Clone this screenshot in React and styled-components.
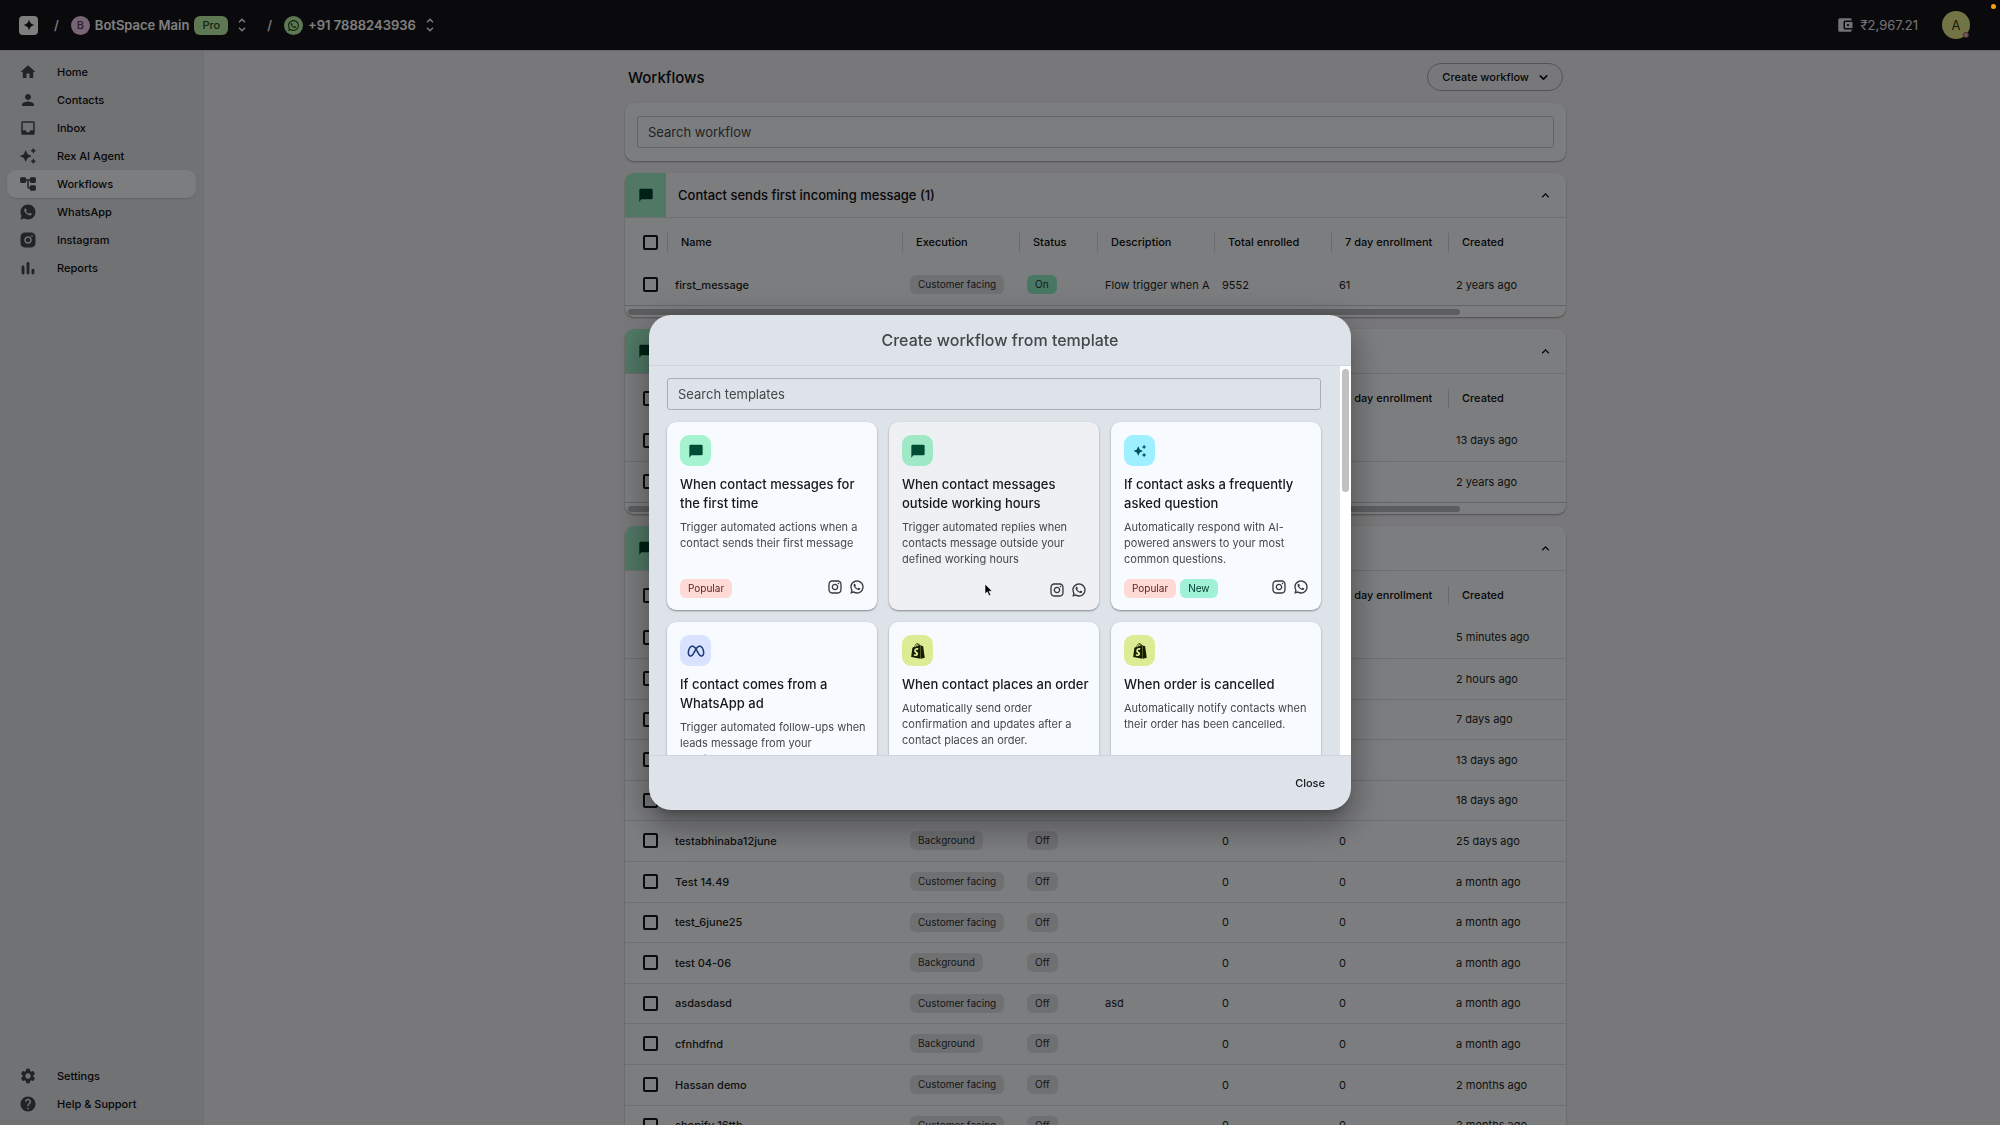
import React from 'react'
import styled, { createGlobalStyle, css } from 'styled-components'
import {
  MdHome,
  MdPerson,
  MdInbox,
  MdAutoAwesome,
  MdSettings,
  MdHelp,
  MdUnfoldMore,
  MdAccountBalanceWallet,
  MdKeyboardArrowUp,
} from 'react-icons/md'
import { RiInstagramFill, RiWhatsappFill, RiInstagramLine, RiWhatsappLine, RiMetaLine } from 'react-icons/ri'
import { FaShopify } from 'react-icons/fa6'
import { ChevronDown } from 'lucide-react'

const GlobalStyle = createGlobalStyle`
* { box-sizing: border-box; }
body {
  margin: 0;
  font-family: Inter, 'Noto Sans', sans-serif;
  font-size: 11px;
  color: #0c0d10;
}
button, input { font-family: inherit; }
svg { display: block; flex-shrink: 0; }
`;

const Shell = styled.div`
display: flex;
flex-direction: column;
height: 100vh;
overflow: hidden;
background-color: #f1f1f4;
`;

// top bar
const Header = styled.header`
display: flex;
align-items: center;
height: 50px;
flex-shrink: 0;
padding: 0 30px 0 19px;
background-color: #141418;
color: #ffffff;
`;
const Logo = styled.a`
display: flex;
align-items: center;
justify-content: center;
width: 19px;
height: 19px;
border-radius: 4px;
background-color: #ffffff;
color: #141418;
`;
const Slash = styled.span`
margin: 0 12px 0 16px;
font-size: 13px;
font-weight: 500;
`;
const Switcher = styled.button`
display: flex;
align-items: center;
gap: 5px;
padding: 0;
border: none;
background: none;
color: #ffffff;
font-size: 13px;
font-weight: 600;
`;
const Round = styled.span`
display: flex;
align-items: center;
justify-content: center;
width: 19px;
height: 19px;
border-radius: 50%;
background-color: ${({ $bg }) => $bg};
color: ${({ $color }) => $color};
font-size: 11px;
font-weight: 500;
`;
const Plan = styled.span`
height: 19px;
padding: 0 8px;
border-radius: 6px;
background-color: #bcf0a8;
color: #24481c;
font-size: 11px;
font-weight: 500;
line-height: 19px;
`;
const Balance = styled.div`
display: flex;
align-items: center;
gap: 7px;
margin-left: auto;
font-size: 13px;
color: #e6e6ea;
`;
const Avatar = styled.button`
position: relative;
width: 28px;
height: 28px;
margin-left: 24px;
padding: 0;
border: none;
border-radius: 50%;
background-color: #e5e88c;
color: #33360a;
font-size: 13px;
`;
const Status = styled.span`
position: absolute;
right: 1px;
bottom: 1px;
width: 6px;
height: 6px;
border-radius: 50%;
background-color: #f0b8b8;
border: 1px solid #8a5050;
`;

const Body = styled.div`
display: flex;
flex: 1;
min-height: 0;
border-top: 1px solid #d0d1d4;
`;

// left navigation
const Sidebar = styled.nav`
display: flex;
flex-direction: column;
justify-content: space-between;
width: 204px;
flex-shrink: 0;
padding: 7px;
background-color: #e3e5e8;
border-right: 1px solid #dcdee1;
`;
const NavLink = styled.a`
display: flex;
align-items: center;
gap: 20px;
height: 28px;
padding-left: 12px;
border-radius: 9px;
color: #0c0d10;
font-weight: 500;
text-decoration: none;
svg {
  color: #43474b;
}
${({ $active }) => $active && css`
background-color: #f9fbfe;
box-shadow: 0 1px 2px rgba(0, 0, 0, 0.15);
`}
`;

const Main = styled.main`
flex: 1;
min-width: 0;
padding: 12px 13px 0 0;
`;
const Column = styled.div`
max-width: 941px;
margin: 0 auto;
`;
const TitleRow = styled.div`
display: flex;
align-items: center;
justify-content: space-between;
padding: 0 3px;
margin-bottom: 12px;
`;
const PageTitle = styled.h1`
margin: 0;
font-size: 15px;
font-weight: 500;
`;
const CreateButton = styled.button`
display: flex;
align-items: center;
gap: 8px;
height: 28px;
padding: 0 12px 0 14px;
border: 1px solid #a4a7ab;
border-radius: 14px;
background: none;
color: #0c0d10;
font-size: 11px;
font-weight: 500;
`;
const Card = styled.section`
margin-bottom: 12px;
border-radius: 9px;
background-color: #f9fbfe;
box-shadow: 0 1px 2px rgba(0, 0, 0, 0.35);
overflow: hidden;
`;
const SearchCard = styled(Card)`
padding: 13px 12px;
`;
const SearchField = styled.input`
display: block;
width: 100%;
height: 32px;
padding: 0 10px;
border: 1px solid ${({ $border }) => $border};
border-radius: 3px;
background: none;
outline: none;
font-size: 13px;
&::placeholder {
  color: #44474b;
  opacity: 1;
}
`;

// one accordion per trigger
const GroupHead = styled.div`
display: flex;
align-items: center;
height: 45px;
border-bottom: 1px solid #dcdee1;
`;
const GroupIcon = styled.span`
display: flex;
align-items: center;
justify-content: center;
align-self: stretch;
width: 41px;
margin-right: 12px;
background-color: #a2f0cb;
color: #00422b;
`;
const GroupTitle = styled.h2`
flex: 1;
margin: 0;
font-size: 13px;
font-weight: 500;
`;
const Toggle = styled.button`
margin-right: 13px;
padding: 0;
border: none;
background: none;
color: #0c0d10;
`;
const Table = styled.table`
width: 100%;
table-layout: fixed;
border-collapse: collapse;
tbody tr {
  height: 41px;
}
tbody tr:nth-child(5n + 3),
tbody tr:nth-child(5n) {
  height: 40px;
}
tbody tr + tr td {
  border-top: 1px solid #dcdee1;
}
`;
const Col = styled.col`
width: ${({ $w }) => $w}px;
`;
const HeadCell = styled.th`
height: 46px;
padding: 2px 0 0;
text-align: left;
font-weight: 500;
white-space: nowrap;
`;
const HeadLabel = styled.div`
padding-left: 13px;
border-left: 1px solid #d2d5d8;
line-height: 19px;
`;
const Cell = styled.td`
padding: 0 5px 0 8px;
overflow: hidden;
white-space: nowrap;
color: #1c1e22;
font-weight: ${({ $strong }) => ($strong ? 500 : 400)};
`;
const CheckCell = styled.td`
padding: 0 0 0 18px;
`;
const CheckHead = styled.th`
padding: 2px 0 0 18px;
`;
const Checkbox = styled.input.attrs({ type: 'checkbox' })`
display: block;
appearance: none;
width: 15px;
height: 15px;
margin: 0;
border: 2px solid #14161a;
border-radius: 2px;
`;
const Tag = styled.span`
display: inline-block;
padding: 0 8px;
border-radius: 6px;
background-color: ${({ $bg }) => $bg || '#dfe0e3'};
color: ${({ $color }) => $color || '#2c2f33'};
font-size: 10px;
line-height: 19px;
`;
const HScroll = styled.div`
height: 12px;
padding: 3px 3px 0;
border-top: 1px solid #c8cacd;
&::before {
  content: '';
  display: block;
  width: 89%;
  height: 6px;
  border-radius: 3px;
  background-color: #b9bbbe;
}
`;

// dialog
const Overlay = styled.div`
position: fixed;
inset: 0;
display: flex;
align-items: center;
justify-content: center;
background-color: rgba(0, 0, 0, 0.5);
`;
const Dialog = styled.div`
display: flex;
flex-direction: column;
width: 100%;
max-width: 702px;
height: 44vh;
border-radius: 22px;
background-color: #dee2e9;
overflow: hidden;
box-shadow: 0 9px 12px -6px rgba(0, 0, 0, 0.3), 0 19px 30px 3px rgba(0, 0, 0, 0.18), 0 7px 36px 6px rgba(0, 0, 0, 0.16);
`;
const DialogTitle = styled.h2`
margin: 0;
border-bottom: 1px solid #cfd5dc;
color: #44474b;
font-size: 16px;
font-weight: 500;
line-height: 50px;
text-align: center;
`;
const DialogBody = styled.div`
display: flex;
flex: 1;
min-height: 0;
`;
const DialogContent = styled.div`
flex: 1;
padding: 12px 19px 0 18px;
overflow: hidden;
`;
const DialogScroll = styled.div`
width: 11px;
padding: 3px 2px;
background-color: #ffffff;
&::before {
  content: '';
  display: block;
  height: 123px;
  width: 7px;
  border-radius: 4px;
  background-color: #c1c1c1;
}
`;
const DialogFooter = styled.div`
display: flex;
align-items: center;
justify-content: flex-end;
height: 55px;
padding: 0 26px 1px 0;
border-top: 1px solid #cfd5dc;
`;
const CloseButton = styled.button`
padding: 0;
border: none;
background: none;
color: #16181c;
font-size: 11px;
font-weight: 500;
`;
const Templates = styled.div`
display: grid;
grid-template-columns: repeat(3, 1fr);
gap: 12px;
margin-top: 12px;
`;
const Template = styled.article`
position: relative;
display: flex;
flex-direction: column;
min-height: 188px;
padding: 13px 8px 12px 13px;
border-radius: 9px;
background-color: ${({ $hover }) => ($hover ? '#eef0f4' : '#f7fbff')};
box-shadow: 0 1px 2px rgba(0, 0, 0, 0.4);
`;
const TemplateIcon = styled.span`
display: flex;
align-items: center;
justify-content: center;
width: 31px;
height: 31px;
border-radius: 9px;
background-color: ${({ $bg }) => $bg};
color: ${({ $color }) => $color};
`;
const TemplateTitle = styled.h3`
margin: 9px 0 6px;
color: #16181c;
font-size: 13px;
font-weight: 500;
line-height: 19px;
`;
const TemplateText = styled.p`
margin: 0;
padding-right: 2px;
color: #44474b;
font-size: 11px;
line-height: 16px;
`;
const TemplateFoot = styled.div`
display: flex;
align-items: flex-start;
gap: 4px;
margin-top: auto;
padding-right: 4px;
`;
const Channels = styled.div`
display: flex;
gap: 6px;
margin-left: auto;
color: #35383c;
`;
const Pointer = styled.svg`
position: absolute;
left: 95px;
top: 161px;
`;
const Recording = styled.span`
position: fixed;
top: 4px;
right: 4px;
width: 5px;
height: 5px;
border-radius: 50%;
background-color: #ff9f0a;
`;

const StarIcon = () => (
  <svg width="12" height="12" viewBox="0 0 24 24" fill="currentColor">
    <path d="M12 1c1.6 6.600 4.400 9.400 11 11c-6.600 1.600-9.400 4.400-11 11c-1.600-6.600-4.400-9.400-11-11c6.600-1.600 9.400-4.400 11-11z" />
  </svg>
)

const ChatIcon = () => (
  <svg width="16" height="16" viewBox="0 0 24 24" fill="currentColor">
    <path d="M4 2.500h16a2 2 0 0 1 2 2v12a2 2 0 0 1-2 2H5l-3 3.500v-17.500a2 2 0 0 1 2-2z" />
  </svg>
)

const TreeIcon = () => (
  <svg width="18" height="18" viewBox="0 0 24 24" fill="currentColor">
    <rect x="1.500" y="3" width="8" height="7.500" rx="1.800" />
    <rect x="14.500" y="3" width="8" height="7.500" rx="1.800" />
    <rect x="14.500" y="13.500" width="8" height="7.500" rx="1.800" />
    <path d="M9 6.700h6M12 6.700v9a1.600 1.600 0 0 0 1.600 1.600h1.500" fill="none" stroke="currentColor" strokeWidth="2" />
  </svg>
)

const BarsIcon = () => (
  <svg width="18" height="18" viewBox="0 0 24 24" fill="currentColor">
    <rect x="3.500" y="8.500" width="3.800" height="12" rx="1.900" />
    <rect x="10.100" y="4" width="3.800" height="16.500" rx="1.900" />
    <rect x="16.700" y="13" width="3.800" height="7.500" rx="1.900" />
  </svg>
)

const navItems = [
  ['Home', <MdHome size={18} />],
  ['Contacts', <MdPerson size={18} />],
  ['Inbox', <MdInbox size={18} />],
  ['Rex AI Agent', <MdAutoAwesome size={18} />],
  ['Workflows', <TreeIcon />],
  ['WhatsApp', <RiWhatsappFill size={18} />],
  ['Instagram', <RiInstagramFill size={18} />],
  ['Reports', <BarsIcon />],
]

const footItems = [
  ['Settings', <MdSettings size={18} />],
  ['Help & Support', <MdHelp size={18} />],
]

const CF = 'Customer facing'
const BG = 'Background'

// name, execution, status, description, total, week, created
const groups = [
  {
    title: 'Contact sends first incoming message (1)',
    scroll: true,
    rows: [['first_message', CF, 'On', 'Flow trigger when A', '9552', '61', '2 years ago']],
  },
  {
    title: 'Contact sends a message (2)',
    scroll: true,
    rows: [
      ['welcome_flow', CF, 'Off', '', '0', '0', '13 days ago'],
      ['keyword_reply', CF, 'Off', '', '0', '0', '2 years ago'],
    ],
  },
  {
    title: 'Manually triggered (13)',
    rows: [
      ['demo_flow', CF, 'Off', '', '0', '0', '5 minutes ago'],
      ['demo_flow_2', CF, 'Off', '', '0', '0', '2 hours ago'],
      ['test_july', CF, 'Off', '', '0', '0', '7 days ago'],
      ['test_june', CF, 'Off', '', '0', '0', '13 days ago'],
      ['test_flow', CF, 'Off', '', '0', '0', '18 days ago'],
      ['testabhinaba12june', BG, 'Off', '', '0', '0', '25 days ago'],
      ['Test 14.49', CF, 'Off', '', '0', '0', 'a month ago'],
      ['test_6june25', CF, 'Off', '', '0', '0', 'a month ago'],
      ['test 04-06', BG, 'Off', '', '0', '0', 'a month ago'],
      ['asdasdasd', CF, 'Off', 'asd', '0', '0', 'a month ago'],
      ['cfnhdfnd', BG, 'Off', '', '0', '0', 'a month ago'],
      ['Hassan demo', CF, 'Off', '', '0', '0', '2 months ago'],
      ['shopify 16tth', CF, 'Off', '', '0', '0', '2 months ago'],
    ],
  },
]

const heads = ['Name', 'Execution', 'Status', 'Description', 'Total enrolled', '7 day enrollment', 'Created']
const widths = [42, 235, 117, 78, 117, 117, 117]

const green = { bg: '#a5f4cf', color: '#004d36' }
const lime = { bg: '#dcec94', color: '#171e00' }

const templates = [
  {
    title: 'When contact messages for the first time',
    text: 'Trigger automated actions when a contact sends their first message',
    icon: <ChatIcon />,
    tone: green,
    tags: ['Popular'],
  },
  {
    title: 'When contact messages outside working hours',
    text: 'Trigger automated replies when contacts message outside your defined working hours',
    icon: <ChatIcon />,
    tone: { bg: '#9fe9c6', color: '#004d36' },
    tags: [],
    hover: true,
  },
  {
    title: 'If contact asks a frequently asked question',
    text: 'Automatically respond with AI-powered answers to your most common questions.',
    icon: <MdAutoAwesome size={14} />,
    tone: { bg: '#9eefff', color: '#004e5a' },
    tags: ['Popular', 'New'],
  },
  {
    title: 'If contact comes from a WhatsApp ad',
    text: 'Trigger automated follow-ups when leads message from your WhatsApp ads.',
    icon: <RiMetaLine size={18} />,
    tone: { bg: '#d9e2ff', color: '#1f3a78' },
    tags: [],
  },
  {
    title: 'When contact places an order',
    text: 'Automatically send order confirmation and updates after a contact places an order.',
    icon: <FaShopify size={16} />,
    tone: lime,
    tags: [],
  },
  {
    title: 'When order is cancelled',
    text: 'Automatically notify contacts when their order has been cancelled.',
    icon: <FaShopify size={16} />,
    tone: lime,
    tags: [],
  },
]

const tagTones = {
  Popular: { bg: '#ffd9d6', color: '#5c2523' },
  New: { bg: '#9ff2d6', color: '#00382c' },
}

const Group = ({ title, rows, scroll }) => (
  <Card>
    <GroupHead>
      <GroupIcon><ChatIcon /></GroupIcon>
      <GroupTitle>{title}</GroupTitle>
      <Toggle aria-label={`Collapse ${title}`}><MdKeyboardArrowUp size={15} /></Toggle>
    </GroupHead>
    <Table>
      <colgroup>
        {widths.map((w, i) => <Col key={i} $w={w} />)}
        <col />
      </colgroup>
      <thead>
        <tr>
          <CheckHead><Checkbox aria-label="Select all" /></CheckHead>
          {heads.map((h) => <HeadCell key={h}><HeadLabel>{h}</HeadLabel></HeadCell>)}
        </tr>
      </thead>
      <tbody>
        {rows.map(([name, execution, status, description, total, week, created]) => (
          <tr key={name}>
            <CheckCell><Checkbox aria-label={`Select ${name}`} /></CheckCell>
            <Cell $strong>{name}</Cell>
            <Cell><Tag>{execution}</Tag></Cell>
            <Cell><Tag $bg={status === 'On' ? '#90efc9' : undefined}>{status}</Tag></Cell>
            <Cell>{description}</Cell>
            <Cell>{total}</Cell>
            <Cell>{week}</Cell>
            <Cell>{created}</Cell>
          </tr>
        ))}
      </tbody>
    </Table>
    {scroll && <HScroll />}
  </Card>
)

const App = () => {
  return (
    <>
      <GlobalStyle />
      <Shell>
        <Header>
          <Logo href="#" aria-label="BotSpace"><StarIcon /></Logo>
          <Slash>/</Slash>
          <Switcher>
            <Round $bg="#efc8ea" $color="#5c3a58">B</Round>
            BotSpace Main
            <Plan>Pro</Plan>
            <MdUnfoldMore size={18} />
          </Switcher>
          <Slash>/</Slash>
          <Switcher>
            <Round $bg="#bcf0a8" $color="#24481c"><RiWhatsappLine size={13} /></Round>
            +91 7888243936
            <MdUnfoldMore size={18} />
          </Switcher>
          <Balance><MdAccountBalanceWallet size={18} />₹2,967.21</Balance>
          <Avatar aria-label="Account">A<Status /></Avatar>
        </Header>
        <Body>
          <Sidebar>
            <div>
              {navItems.map(([label, icon]) => (
                <NavLink key={label} href="#" $active={label === 'Workflows'}>{icon}{label}</NavLink>
              ))}
            </div>
            <div>
              {footItems.map(([label, icon]) => (
                <NavLink key={label} href="#">{icon}{label}</NavLink>
              ))}
            </div>
          </Sidebar>
          <Main>
            <Column>
              <TitleRow>
                <PageTitle>Workflows</PageTitle>
                <CreateButton>Create workflow <ChevronDown size={13} strokeWidth={3} /></CreateButton>
              </TitleRow>
              <SearchCard>
                <SearchField $border="#c4c7ca" placeholder="Search workflow" aria-label="Search workflow" />
              </SearchCard>
              {groups.map((g) => <Group key={g.title} {...g} />)}
            </Column>
          </Main>
        </Body>
      </Shell>

      <Overlay>
        <Dialog role="dialog" aria-labelledby="dialog-title">
          <DialogTitle id="dialog-title">Create workflow from template</DialogTitle>
          <DialogBody>
            <DialogContent>
              <SearchField $border="#a9afb6" placeholder="Search templates" aria-label="Search templates" />
              <Templates>
                {templates.map((t) => (
                  <Template key={t.title} $hover={t.hover}>
                    <TemplateIcon $bg={t.tone.bg} $color={t.tone.color}>{t.icon}</TemplateIcon>
                    <TemplateTitle>{t.title}</TemplateTitle>
                    <TemplateText>{t.text}</TemplateText>
                    <TemplateFoot>
                      {t.tags.map((tag) => (
                        <Tag key={tag} $bg={tagTones[tag].bg} $color={tagTones[tag].color}>{tag}</Tag>
                      ))}
                      <Channels>
                        <RiInstagramLine size={16} />
                        <RiWhatsappLine size={16} />
                      </Channels>
                    </TemplateFoot>
                    {t.hover && (
                      <Pointer width="9" height="14" viewBox="0 0 9 14">
                        <path d="M1 1v10l2.300-2.200L5 12.800l1.700-.7L5.100 8.300h3z" fill="#000" stroke="#fff" strokeWidth=".6" />
                      </Pointer>
                    )}
                  </Template>
                ))}
              </Templates>
            </DialogContent>
            <DialogScroll />
          </DialogBody>
          <DialogFooter><CloseButton>Close</CloseButton></DialogFooter>
        </Dialog>
      </Overlay>
      <Recording />
    </>
  )
}

export default App
